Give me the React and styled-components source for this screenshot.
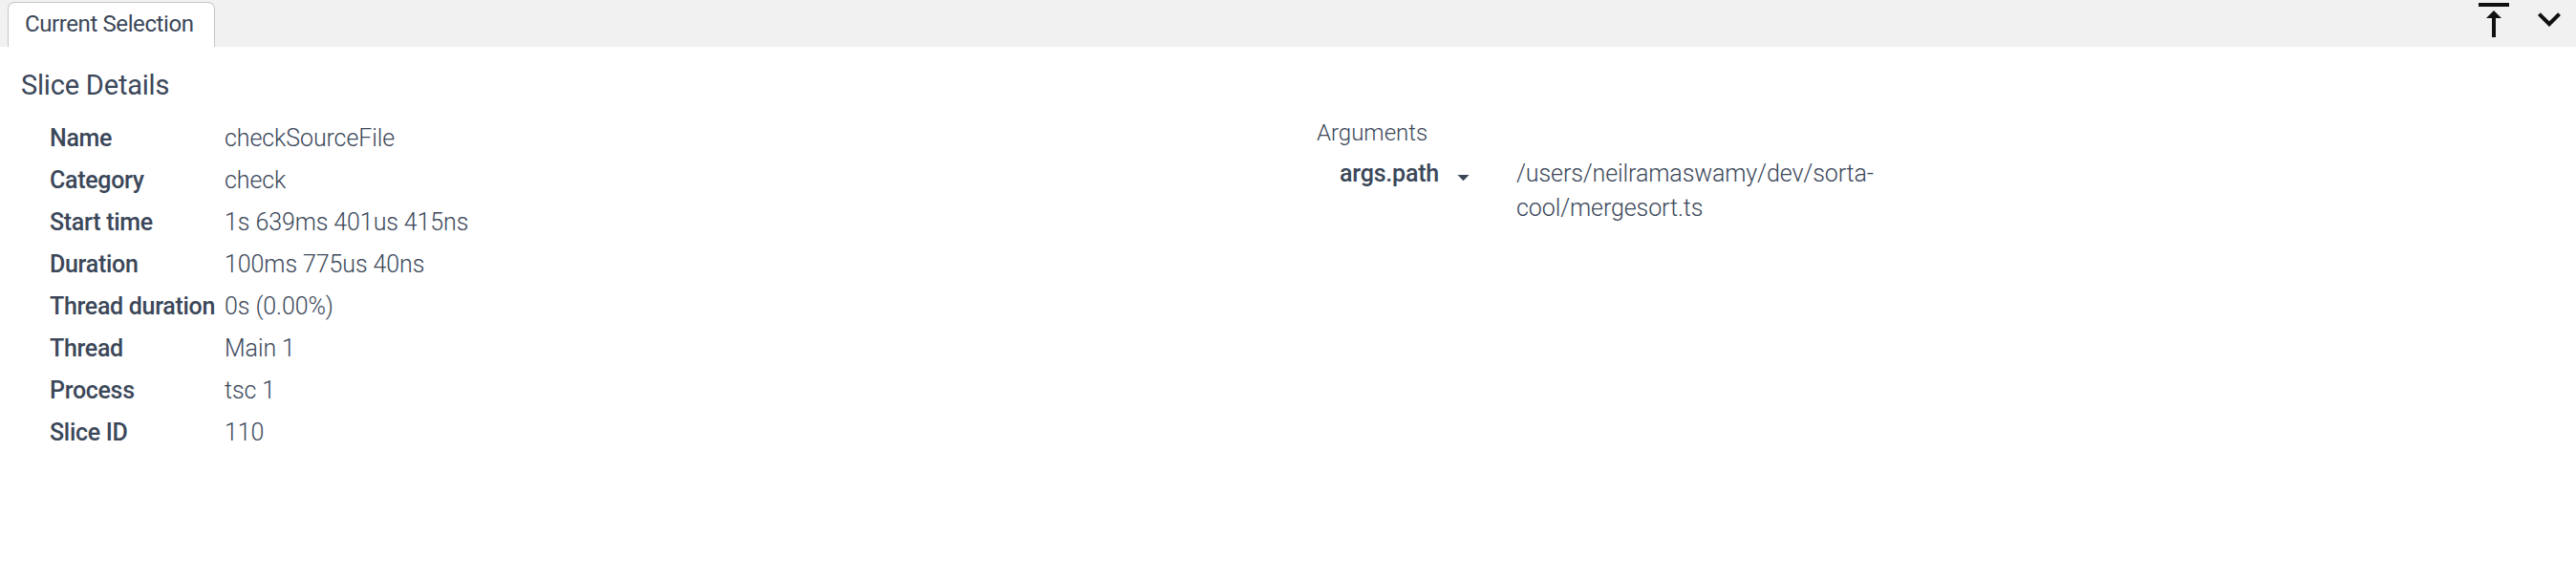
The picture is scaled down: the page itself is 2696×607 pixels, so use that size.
import React from "react";
import styled, { createGlobalStyle } from "styled-components";

const GlobalStyle = createGlobalStyle`
  html, body {
    margin: 0;
    padding: 0;
    background: #ffffff;
  }
  body {
    font-family: Roboto, "Noto Sans", "Liberation Sans", sans-serif;
    color: #3b4759;
  }
`;

const Page = styled.div`
  width: 100%;
  min-height: 607px;
  background: #ffffff;
`;

const TabBar = styled.div`
  height: 49px;
  background: #f1f1f1;
  display: flex;
  align-items: flex-end;
  justify-content: space-between;
  padding-left: 8px;
  padding-right: 4px;
  box-sizing: border-box;
`;

const Tab = styled.div`
  height: 47px;
  box-sizing: border-box;
  display: flex;
  align-items: center;
  padding: 0 21px 2px 17px;
  background: #ffffff;
  border: 1px solid #c6c6c6;
  border-bottom: none;
  border-radius: 7px 7px 0 0;
  font-size: 24px;
  letter-spacing: -0.4px;
  color: #3b4759;
`;

const BarActions = styled.div`
  align-self: flex-start;
  display: flex;
  gap: 10px;
  margin-top: -3px;
`;

const IconButton = styled.button`
  width: 48px;
  height: 48px;
  padding: 0;
  margin: 0;
  border: none;
  background: transparent;
  display: flex;
  align-items: center;
  justify-content: center;
  margin-top: ${(p) => (p.$shift ? `${p.$shift}px` : "0")};
  color: #111111;
  svg {
    display: block;
  }
`;

const Details = styled.div`
  display: grid;
  grid-template-columns: 1fr 1fr;
  padding: 22px 22px 0 22px;
`;

const Column = styled.section`
  display: flex;
  flex-direction: column;
`;

const Title = styled.h2`
  margin: 0 0 16px 0;
  font-size: 29px;
  line-height: 36px;
  font-weight: 400;
  letter-spacing: -0.2px;
  color: #3b4759;
`;

const PropGrid = styled.div`
  display: grid;
  grid-template-columns: max-content 1fr;
  column-gap: 10px;
  margin-left: 30px;
`;

const PropKey = styled.div`
  font-size: 25px;
  line-height: 44px;
  font-weight: 500;
  letter-spacing: -0.3px;
  color: #3b4759;
  white-space: nowrap;
`;

const PropValue = styled.div`
  font-size: 25px;
  line-height: 44px;
  font-weight: 300;
  letter-spacing: -0.1px;
  color: #3b4759;
`;

const ArgsColumn = styled.section`
  display: flex;
  flex-direction: column;
  padding-left: 30px;
  padding-top: 53px;
`;

const SubTitle = styled.div`
  font-size: 24px;
  line-height: 30px;
  font-weight: 300;
  color: #3b4759;
  margin-bottom: 10px;
`;

const ArgsGrid = styled.div`
  display: grid;
  grid-template-columns: max-content max-content 440px;
  align-items: start;
  margin-left: 24px;
`;

const ArgKey = styled.div`
  font-size: 25px;
  line-height: 36px;
  font-weight: 500;
  letter-spacing: -0.2px;
  color: #3b4759;
`;

const DropButton = styled.button`
  width: 29px;
  height: 29px;
  padding: 0;
  border: none;
  background: transparent;
  margin: 7px 41px 0 11px;
  color: #3b4759;
  svg {
    display: block;
  }
`;

const ArgValue = styled.div`
  font-size: 25px;
  line-height: 36px;
  font-weight: 300;
  letter-spacing: -0.1px;
  color: #3b4759;
  overflow-wrap: break-word;
`;

const VerticalAlignTopIcon = () => (
  <svg width="48" height="48" viewBox="0 0 24 24" fill="currentColor">
    <path d="M8 11h3v10h2V11h3l-4-4-4 4zM4 3v2h16V3H4z" />
  </svg>
);

const ExpandMoreIcon = () => (
  <svg width="48" height="48" viewBox="0 0 24 24" fill="currentColor">
    <path d="M16.59 8.59L12 13.17 7.41 8.59 6 10l6 6 6-6z" />
  </svg>
);

const ArrowDropDownIcon = () => (
  <svg width="29" height="29" viewBox="0 0 24 24" fill="currentColor">
    <path d="M7 10l5 5 5-5z" />
  </svg>
);

const rows = [
  ["Name", "checkSourceFile"],
  ["Category", "check"],
  ["Start time", "1s 639ms 401us 415ns"],
  ["Duration", "100ms 775us 40ns"],
  ["Thread duration", "0s (0.00%)"],
  ["Thread", "Main 1"],
  ["Process", "tsc 1"],
  ["Slice ID", "110"],
];

export default function App() {
  return (
    <Page>
      <GlobalStyle />
      <TabBar>
        <Tab>Current Selection</Tab>
        <BarActions>
          <IconButton aria-label="Pin to top">
            <VerticalAlignTopIcon />
          </IconButton>
          <IconButton aria-label="Collapse" $shift={-1}>
            <ExpandMoreIcon />
          </IconButton>
        </BarActions>
      </TabBar>
      <Details>
        <Column>
          <Title>Slice Details</Title>
          <PropGrid>
            {rows.map(([k, v]) => (
              <React.Fragment key={k}>
                <PropKey>{k}</PropKey>
                <PropValue>{v}</PropValue>
              </React.Fragment>
            ))}
          </PropGrid>
        </Column>
        <ArgsColumn>
          <SubTitle>Arguments</SubTitle>
          <ArgsGrid>
            <ArgKey>args.path</ArgKey>
            <DropButton aria-label="Menu">
              <ArrowDropDownIcon />
            </DropButton>
            <ArgValue>/users/neilramaswamy/dev/sorta-cool/mergesort.ts</ArgValue>
          </ArgsGrid>
        </ArgsColumn>
      </Details>
    </Page>
  );
}
